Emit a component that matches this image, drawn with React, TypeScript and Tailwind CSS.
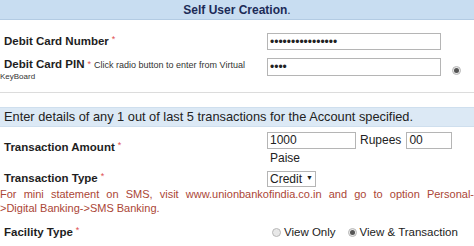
const font = { fontFamily: '"Liberation Sans", Arial, sans-serif' }

function Star() {
  return <span className="text-[#e05050] font-normal text-[9px] align-top ml-[3px]">*</span>
}

function Radio({ checked }: { checked?: boolean }) {
  return (
    <span className="inline-flex w-[9px] h-[9px] rounded-full border border-[#b8b8b8] bg-[#e8e8e8] items-center justify-center shrink-0">
      {checked && <span className="w-[5px] h-[5px] rounded-full bg-[#555]" />}
    </span>
  )
}

function Box({ className, children }: { className: string; children?: React.ReactNode }) {
  return (
    <div className={`border border-[#b5b5b5] bg-white flex items-center px-[2px] text-[12px] text-[#222] ${className}`}>
      {children}
    </div>
  )
}

export default function App() {
  return (
    <div className="w-[474px] h-[246px] bg-white overflow-hidden text-[#1e1e1e]" style={font}>
      {/* Header */}
      <div className="h-[20px] bg-[#c8ddf1] border-b border-[#b3cbe3] flex items-center justify-center">
        <span className="text-[12px] font-bold text-[#1c2b57]">Self User Creation</span>
        <span className="text-[12px] text-[#1c2b57]">.</span>
      </div>

      {/* Card details */}
      <div className="border-b border-[#dcdcdc] pb-[10px]">
        <div className="flex items-center mt-[13px] h-[17px]">
          <div className="w-[267px] pl-[4px] text-[11.5px] font-bold">
            Debit Card Number<Star />
          </div>
          <Box className="w-[174px] h-[17px] text-[9px]">••••••••••••••••</Box>
        </div>
        <div className="flex mt-[8px]">
          <div className="w-[267px]">
            <div className="pl-[4px] text-[11.5px] font-bold leading-[13px] whitespace-nowrap">
              Debit Card PIN<Star />
              <span className="font-normal text-[9px] ml-[3px] text-[#333]">
                Click radio button to enter from Virtual
              </span>
            </div>
            <div className="text-[8px] text-[#333] leading-[10px]">KeyBoard</div>
          </div>
          <Box className="w-[174px] h-[18px] text-[9px]">••••</Box>
          <div className="flex items-center ml-[11px]">
            <Radio checked />
          </div>
        </div>
      </div>

      {/* Band */}
      <div className="mt-[14px] h-[20px] bg-[#dce9f5] border-y border-[#cfdfee] flex items-center pl-[4px] text-[12.8px] text-[#222] whitespace-nowrap">
        Enter details of any 1 out of last 5 transactions for the Account specified.
      </div>

      {/* Amount */}
      <div className="flex mt-[4px]">
        <div className="w-[267px] pl-[4px] pt-[8px] text-[11.5px] font-bold">
          Transaction Amount<Star />
        </div>
        <div className="flex flex-col">
          <div className="flex items-center">
            <Box className="w-[89px] h-[17px]">1000</Box>
            <span className="ml-[4px] text-[12px] text-[#222]">Rupees</span>
            <Box className="ml-[5px] w-[46px] h-[17px]">00</Box>
          </div>
          <div className="pl-[3px] text-[12px] leading-[18px] text-[#222]">Paise</div>
        </div>
      </div>

      {/* Type */}
      <div className="flex items-center mt-[3px]">
        <div className="w-[267px] pl-[4px] text-[11.5px] font-bold">
          Transaction Type<Star />
        </div>
        <Box className="w-[49px] h-[16px] gap-[4px]">
          Credit<span className="text-[7px]">▼</span>
        </Box>
      </div>

      {/* Note */}
      <div className="text-[11px] text-[#ab4636] leading-[14px]">
        <div className="text-justify [text-align-last:justify] whitespace-nowrap">
          For mini statement on SMS, visit www.unionbankofindia.co.in and go to option Personal-
        </div>
        <div>&gt;Digital Banking-&gt;SMS Banking.</div>
      </div>

      {/* Facility */}
      <div className="flex items-center mt-[8px] h-[18px]">
        <div className="w-[272px] pl-[4px] text-[11.5px] font-bold">
          Facility Type<Star />
        </div>
        <label className="flex items-center gap-[3px] text-[11.5px] text-[#222]">
          <Radio /> View Only
        </label>
        <label className="flex items-center gap-[3px] ml-[12px] text-[11.5px] text-[#222]">
          <Radio checked /> View &amp; Transaction
        </label>
      </div>
    </div>
  )
}
